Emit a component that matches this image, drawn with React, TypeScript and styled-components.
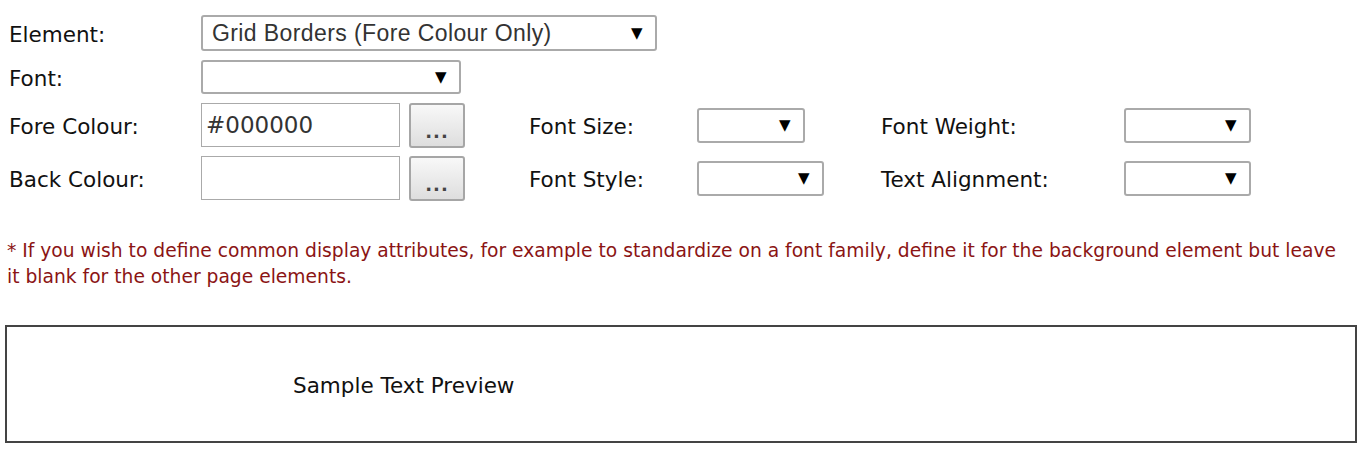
import styled, { createGlobalStyle } from "styled-components";

const GlobalStyle = createGlobalStyle`
body {
  margin: 0;
  background: #ffffff;
  font-family: "DejaVu Sans", Tahoma, sans-serif;
  color: #000;
}
`;

const Page = styled.div`
padding: 15px 9px 0 5px;
`;

const FormGrid = styled.div`
display: grid;
grid-template-columns: 192px 208px 120px 168px 184px 243px auto;
grid-template-rows: 36px 34px 44px 44px;
row-gap: 9px;
align-items: center;
padding-left: 4px;
`;

const Label = styled.label`
font-size: 21.5px;
color: #111;
white-space: nowrap;
padding-top: 3px;
`;

const SelectBox = styled.div<{ $width: number; $height?: number }>`
width: ${(p) => p.$width}px;
height: ${(p) => p.$height ?? 35}px;
box-sizing: border-box;
border: 2px solid #aaaaaa;
border-radius: 3px;
background: #fff;
display: flex;
align-items: center;
justify-content: space-between;
padding: 0 12px 0 9px;
font-family: "Liberation Sans", Arial, sans-serif;
font-size: 23px;
letter-spacing: 0.4px;
color: #333;
grid-column: span ${(p) => (p.$width > 300 ? 4 : 1)};
`;

const Arrow = styled.span`
font-family: "DejaVu Sans", sans-serif;
font-size: 15px;
color: #000;
`;

const TextBox = styled.div`
width: 199px;
height: 44px;
box-sizing: border-box;
border: 1px solid #aaaaaa;
display: flex;
align-items: center;
padding-left: 4px;
font-size: 23px;
color: #333;
`;

const DotsButton = styled.button`
width: 56px;
height: 45px;
box-sizing: border-box;
border: 2px solid #a6a6a6;
border-radius: 3px;
background: linear-gradient(#f8f8f8, #dedede);
font-family: "DejaVu Sans", sans-serif;
font-size: 18px;
font-weight: bold;
color: #444;
padding: 12px 0 0;
letter-spacing: 1px;
`;

const Note = styled.p`
margin: 38px 8px 0 2px;
font-size: 18.7px;
line-height: 26px;
color: #8b1414;
`;

const Preview = styled.div`
margin-top: 35px;
height: 118px;
box-sizing: border-box;
border: 2px solid #444;
display: flex;
align-items: center;
padding: 2px 0 0 286px;
font-size: 21.5px;
color: #111;
`;

function Select(props: { width: number; value?: string; height?: number }) {
  return (
    <SelectBox $width={props.width} $height={props.height}>
      <span>{props.value ?? ""}</span>
      <Arrow>▼</Arrow>
    </SelectBox>
  );
}

export default function App() {
  return (
    <>
      <GlobalStyle />
      <Page>
        <FormGrid>
          <Label>Element:</Label>
          <Select width={456} value="Grid Borders (Fore Colour Only)" height={36} />
          <span />
          <span />
          <Label>Font:</Label>
          <Select width={260} height={34} />
          <span />
          <span />
          <span />
          <span />
          <span />
          <Label>Fore Colour:</Label>
          <TextBox>#000000</TextBox>
          <DotsButton>...</DotsButton>
          <Label>Font Size:</Label>
          <Select width={108} />
          <Label>Font Weight:</Label>
          <Select width={127} />
          <Label>Back Colour:</Label>
          <TextBox />
          <DotsButton>...</DotsButton>
          <Label>Font Style:</Label>
          <Select width={127} />
          <Label>Text Alignment:</Label>
          <Select width={127} />
        </FormGrid>
        <Note>
          * If you wish to define common display attributes, for example to standardize on a font family, define it for the background element but leave it blank for the other page elements.
        </Note>
        <Preview>Sample Text Preview</Preview>
      </Page>
    </>
  );
}
